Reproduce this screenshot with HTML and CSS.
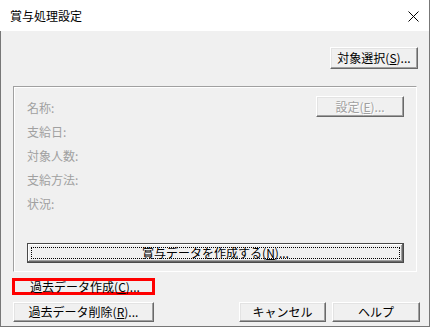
FILE: index.html
```html
<!DOCTYPE html>
<html lang="ja">
<head>
    <meta charset="UTF-8">
    <title>賞与処理設定</title>
    <link rel="stylesheet" href="styles.css">
</head>
<body>
    <div class="window">
        <!-- Title bar -->
        <div class="titlebar">
            <span class="title">賞与処理設定</span>
            <svg class="close-icon" width="11" height="11" viewBox="0 0 11 11">
                <path d="M0.5 0.5 L10.5 10.5 M10.5 0.5 L0.5 10.5" stroke="#000" stroke-width="1" fill="none"/>
            </svg>
        </div>

        <div class="client">
            <div class="top-row">
                <button class="btn btn-select">対象選択(<u>S</u>)...</button>
            </div>

            <div class="group">
                <div class="row">
                    <span class="label">名称:</span>
                    <button class="btn btn-setting" disabled>設定(<u>E</u>)...</button>
                </div>
                <div class="row"><span class="label">支給日:</span></div>
                <div class="row"><span class="label">対象人数:</span></div>
                <div class="row"><span class="label">支給方法:</span></div>
                <div class="row"><span class="label">状況:</span></div>

                <button class="btn btn-create">賞与データを作成する(<u>N</u>)...</button>
            </div>

            <div class="bottom">
                <div class="left-col">
                    <button class="btn btn-past-make"><span class="past-make-text">過去データ作成(<u>C</u>)...</span></button>
                    <button class="btn btn-past-del">過去データ削除(<u>R</u>)...</button>
                </div>
                <div class="right-btns">
                    <button class="btn btn-cancel">キャンセル</button>
                    <button class="btn btn-help">ヘルプ</button>
                </div>
            </div>
        </div>
    </div>
</body>
</html>
```

FILE: styles.css
```css
body {
    margin: 0;
    font-family: "Noto Sans CJK JP", "Liberation Sans", sans-serif;
    font-size: 12px;
    color: #000;
    background: #f0f0f0;
}

.window {
    width: 430px;
    height: 327px;
    box-sizing: border-box;
    border-right: 1px solid #777;
    border-bottom: 1px solid #777;
    background: #f0f0f0;
}

.titlebar {
    height: 31px;
    background: #fff;
    display: flex;
    align-items: center;
    justify-content: space-between;
    padding: 0 10px 0 10px;
}

.title {
    font-size: 12px;
}

.close-icon {
    margin-top: 1px;
}

.client {
    height: 295px;
    box-sizing: border-box;
    border-left: 1px solid #777;
}

.top-row {
    display: flex;
    justify-content: flex-end;
    padding: 16px 11px 0 0;
}

/* classic 3D push button */
.btn {
    font-family: inherit;
    font-size: 12px;
    color: #000;
    background: #f0f0f0;
    box-sizing: border-box;
    margin: 0;
    padding: 0;
    border-top: 1px solid #fff;
    border-left: 1px solid #fff;
    border-right: 1px solid #696969;
    border-bottom: 1px solid #696969;
    box-shadow: inset -1px -1px 0 #a0a0a0, inset 1px 1px 0 #e3e3e3;
    line-height: 16px;
    white-space: nowrap;
}

.btn u {
    text-underline-offset: 1px;
}

.btn-select {
    width: 88px;
    height: 22px;
}

.group {
    margin: 17px 0 0 12px;
    width: 404px;
    height: 186px;
    box-sizing: border-box;
    border-top: 1px solid #a0a0a0;
    border-left: 1px solid #a0a0a0;
    border-right: 1px solid #fff;
    border-bottom: 1px solid #fff;
    box-shadow: inset 1px 1px 0 #fff;
    padding: 9px 12px 0 13px;
}

.row {
    height: 24px;
    display: flex;
    justify-content: space-between;
    align-items: flex-start;
}

.label {
    color: #a0a0a0;
    line-height: 24px;
}

.btn-setting {
    width: 88px;
    height: 21px;
    color: #a0a0a0;
    text-shadow: 1px 1px 0 #fff;
}

.btn-create {
    position: relative;
    margin-top: 27px;
    width: 377px;
    height: 20px;
    border: 1px solid #4a4a4a;
    box-shadow: inset -1px -1px 0 #696969, inset 1px 1px 0 #fff, inset -2px -2px 0 #a0a0a0;
}

.btn-create::after {
    content: "";
    position: absolute;
    left: 3px;
    right: 3px;
    top: 3px;
    bottom: 3px;
    border: 1px dotted #000;
}

.bottom {
    display: flex;
    justify-content: space-between;
    align-items: flex-end;
    padding: 0 9px 0 11px;
}

.left-col {
    display: flex;
    flex-direction: column;
    align-items: flex-start;
}

.btn-past-make {
    margin-top: 6px;
    width: 143px;
    height: 17px;
    border: 3px solid #f00;
    box-shadow: none;
    display: flex;
    align-items: center;
    justify-content: center;
    overflow: visible;
}

.past-make-text {
    display: block;
    line-height: 12px;
    margin: 0 0 0 3px;
}

.btn-past-del {
    margin: 7px 0 0 1px;
    width: 141px;
    height: 20px;
}

.right-btns {
    display: flex;
    gap: 6px;
}

.btn-cancel {
    width: 87px;
    height: 20px;
}

.btn-help {
    width: 88px;
    height: 20px;
}
```
